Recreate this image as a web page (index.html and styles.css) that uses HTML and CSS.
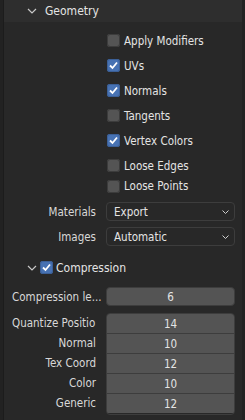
FILE: index.html
```html
<!DOCTYPE html>
<html>
<head>
  <meta charset="UTF-8">
  <link rel="stylesheet" href="styles.css">
</head>
<body>
  <div class="panel">
    <div class="panel-header">
      <svg class="chevron" width="10" height="6" viewBox="0 0 10 6"><polyline points="1,1 5,5 9,1" /></svg>
      <span>Geometry</span>
    </div>

    <div class="checks">
      <label class="check-row"><span class="box"></span>Apply Modifiers</label>
      <label class="check-row"><span class="box on"><svg viewBox="0 0 13 13"><polyline points="3,6.5 5.5,9 10,3.5" /></svg></span>UVs</label>
      <label class="check-row"><span class="box on"><svg viewBox="0 0 13 13"><polyline points="3,6.5 5.5,9 10,3.5" /></svg></span>Normals</label>
      <label class="check-row"><span class="box"></span>Tangents</label>
      <label class="check-row"><span class="box on"><svg viewBox="0 0 13 13"><polyline points="3,6.5 5.5,9 10,3.5" /></svg></span>Vertex Colors</label>
      <label class="check-row"><span class="box"></span>Loose Edges</label>
      <label class="check-row tight"><span class="box"></span>Loose Points</label>
    </div>

    <div class="prop-row">
      <div class="prop-label">Materials</div>
      <div class="dropdown">Export<svg width="7" height="4" viewBox="0 0 7 4"><polyline points="0.5,0.5 3.5,3.5 6.5,0.5" /></svg></div>
    </div>
    <div class="prop-row">
      <div class="prop-label">Images</div>
      <div class="dropdown">Automatic<svg width="7" height="4" viewBox="0 0 7 4"><polyline points="0.5,0.5 3.5,3.5 6.5,0.5" /></svg></div>
    </div>

    <div class="sub-header">
      <svg class="chevron" width="10" height="6" viewBox="0 0 10 6"><polyline points="1,1 5,5 9,1" /></svg>
      <span class="box on"><svg viewBox="0 0 13 13"><polyline points="3,6.5 5.5,9 10,3.5" /></svg></span>
      <span>Compression</span>
    </div>

    <div class="prop-row level">
      <div class="prop-label left">Compression le...</div>
      <div class="num">6</div>
    </div>

    <div class="num-group">
      <div class="group-labels">
        <div class="prop-label left">Quantize Positio</div>
        <div class="prop-label">Normal</div>
        <div class="prop-label">Tex Coord</div>
        <div class="prop-label">Color</div>
        <div class="prop-label">Generic</div>
      </div>
      <div class="group-fields">
        <div class="num">14</div>
        <div class="num">10</div>
        <div class="num">12</div>
        <div class="num">10</div>
        <div class="num">12</div>
      </div>
    </div>
  </div>
</body>
</html>
```

FILE: styles.css
```css
body {
  margin: 0;
  width: 245px;
  height: 420px;
  overflow: hidden;
  background: #222222;
  font-family: "DejaVu Sans Condensed", "DejaVu Sans", sans-serif;
  font-stretch: condensed;
  font-size: 11.5px;
  color: #e4e4e4;
}
.panel {
  margin-left: 3px;
  margin-right: 3px;
  height: 420px;
  border-left: 1px solid #1c1c1c;
  background: #282828;
}
.panel-header {
  height: 22px;
  display: flex;
  align-items: center;
  background: #2e2e2e;
  font-size: 12px;
}
.chevron {
  margin-left: 23px;
  margin-right: 8px;
  fill: none;
  stroke: #c8c8c8;
  stroke-width: 1.2;
}
.checks {
  padding-top: 6px;
  padding-left: 103px;
}
.check-row {
  height: 25px;
  display: flex;
  align-items: center;
}
.check-row.tight {
  height: 22px;
  margin-top: -3px;
}
.box {
  width: 13px;
  height: 13px;
  border-radius: 3px;
  background: #545454;
  box-shadow: inset 0 0 0 1px #3c3c3c;
  margin-right: 4px;
  flex-shrink: 0;
  display: flex;
}
.box.on {
  background: #4772b3;
  box-shadow: inset 0 0 0 1px #3b5f96;
}
.box svg {
  width: 13px;
  height: 13px;
  fill: none;
  stroke: #ffffff;
  stroke-width: 1.8;
}
.prop-row {
  height: 25px;
  display: flex;
  align-items: center;
}
.checks + .prop-row {
  margin-top: 2px;
}
.prop-label {
  width: 92px;
  padding-right: 10px;
  text-align: right;
  white-space: nowrap;
  overflow: hidden;
  color: #d8d8d8;
}
.prop-label.left {
  text-align: left;
  padding-left: 8px;
  width: 84px;
}
.dropdown {
  width: 129px;
  height: 19px;
  box-sizing: border-box;
  border: 1px solid #3d3d3d;
  border-radius: 4px;
  background: #282828;
  display: flex;
  align-items: center;
  justify-content: space-between;
  padding: 0 5px 0 7px;
}
.dropdown svg {
  fill: none;
  stroke: #d0d0d0;
  stroke-width: 1;
}
.sub-header {
  height: 25px;
  margin-top: 6px;
  display: flex;
  align-items: center;
  font-size: 12px;
}
.sub-header .chevron {
  margin-right: 3px;
}
.sub-header .box {
  margin-right: 3px;
}
.num {
  width: 129px;
  height: 19px;
  box-sizing: border-box;
  border: 1px solid #3d3d3d;
  border-radius: 4px;
  background: #545454;
  display: flex;
  align-items: center;
  justify-content: center;
}
.prop-row.level {
  margin-top: 4px;
}
.num-group {
  display: flex;
  margin-top: 4px;
}
.group-labels .prop-label {
  height: 20px;
  line-height: 20px;
}
.group-fields {
  border: 1px solid #3d3d3d;
  border-radius: 4px;
  overflow: hidden;
  height: 100px;
}
.group-fields .num {
  height: 20px;
  border: none;
  border-radius: 0;
  border-top: 1px solid #3d3d3d;
  width: 127px;
}
.group-fields .num:first-child {
  border-top: none;
  height: 19px;
}
```
